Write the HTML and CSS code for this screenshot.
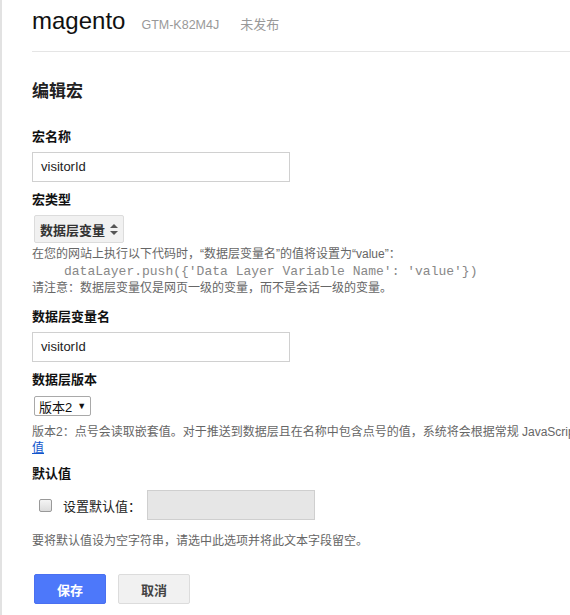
FILE: index.html
```html
<!DOCTYPE html>
<html lang="zh">
<head>
<meta charset="utf-8">
<link rel="stylesheet" href="styles.css">
</head>
<body>
<div class="page">
  <header class="header">
    <span class="brand">magento</span>
    <span class="container-id">GTM-K82M4J</span>
    <span class="status">未发布</span>
  </header>
  <main class="content">
    <h1 class="title">编辑宏</h1>

    <div class="field">
      <div class="label">宏名称</div>
      <div class="input">visitorId</div>
    </div>

    <div class="field field-help">
      <div class="label">宏类型</div>
      <div class="type-select">数据层变量
        <svg class="updown" width="8" height="11" viewBox="0 0 8 11"><path d="M4 0L8 4H0Z M4 11L8 7H0Z" fill="#555"/></svg>
      </div>
      <div class="help">
        <div>在您的网站上执行以下代码时，“数据层变量名”的值将设置为“value”：</div>
        <div class="code">dataLayer.push({'Data Layer Variable Name': 'value'})</div>
        <div>请注意：数据层变量仅是网页一级的变量，而不是会话一级的变量。</div>
      </div>
    </div>

    <div class="field">
      <div class="label">数据层变量名</div>
      <div class="input">visitorId</div>
    </div>

    <div class="field">
      <div class="label">数据层版本</div>
      <div class="version-select">版本2 <span class="arrow">▼</span></div>
      <div class="help help-wide">
        <div class="nowrap">版本2：点号会读取嵌套值。对于推送到数据层且在名称中包含点号的值，系统将会根据常规 JavaScript 规则将其解读为嵌套</div>
        <a class="link" href="#">值</a>
      </div>
    </div>

    <div class="field">
      <div class="label">默认值</div>
      <div class="default-row">
        <span class="checkbox"></span>
        <span class="default-label">设置默认值：</span>
        <span class="input input-disabled"></span>
      </div>
      <div class="help">要将默认值设为空字符串，请选中此选项并将此文本字段留空。</div>
    </div>

    <div class="actions">
      <button class="btn btn-primary">保存</button>
      <button class="btn">取消</button>
    </div>
  </main>
</div>
</body>
</html>
```

FILE: styles.css
```css
html, body {
  margin: 0;
  padding: 0;
  background: #fff;
  overflow: hidden;
}
body {
  font-family: "Liberation Sans", "Noto Sans CJK SC", sans-serif;
  color: #222;
}
.page {
  border-left: 2px solid #e2e2e2;
  margin-left: 0;
  padding-left: 30px;
  min-height: 615px;
  box-sizing: border-box;
}
.header {
  display: flex;
  align-items: baseline;
  height: 52px;
  box-sizing: border-box;
  padding-top: 6px;
  border-bottom: 1px solid #e5e5e5;
  line-height: 30px;
}
.brand {
  font-size: 24px;
  color: #111;
}
.container-id {
  font-size: 12.5px;
  color: #999;
  margin-left: 16px;
}
.status {
  font-size: 13px;
  color: #999;
  margin-left: 21px;
}
.content {
  padding-top: 28px;
}
.title {
  margin: 0 0 24px;
  font-size: 17px;
  line-height: 24px;
  font-weight: bold;
  color: #222;
}
.field {
  margin-bottom: 9px;
}
.field-help {
  margin-bottom: 11px;
}
.label {
  font-size: 13px;
  font-weight: bold;
  color: #111;
  line-height: 17px;
  margin-bottom: 7px;
}
.input {
  display: block;
  box-sizing: border-box;
  width: 258px;
  height: 30px;
  border: 1px solid #d0d0d0;
  padding: 0 8px;
  font-size: 13px;
  line-height: 28px;
  color: #222;
}
.type-select {
  display: inline-flex;
  align-items: center;
  gap: 5px;
  margin-left: 2px;
  height: 28px;
  box-sizing: border-box;
  padding: 0 5px;
  background: #f1f1f1;
  border: 1px solid #dcdcdc;
  border-radius: 2px;
  font-size: 13px;
  font-weight: bold;
  color: #333;
}
.help {
  font-size: 12px;
  line-height: 17px;
  color: #666;
  margin-top: 3px;
}
.code {
  font-family: "Liberation Mono", monospace;
  font-size: 13px;
  color: #888;
  padding-left: 32px;
}
.version-select {
  display: inline-flex;
  align-items: center;
  margin-left: 2px;
  margin-top: 1px;
  height: 20px;
  box-sizing: border-box;
  padding: 0 4px;
  border: 1px solid #a9a9a9;
  border-radius: 2px;
  font-size: 13px;
  color: #111;
}
.arrow {
  font-size: 9px;
  margin-left: 5px;
}
.help-wide {
  width: 700px;
  margin-top: 8px;
  line-height: 16px;
}
.nowrap {
  white-space: nowrap;
}
.link {
  color: #1155cc;
  text-decoration: underline;
}
.default-row {
  display: flex;
  align-items: center;
  margin-top: 8px;
  margin-left: 7px;
}
.checkbox {
  width: 11px;
  height: 11px;
  border: 1px solid #999;
  border-radius: 2px;
  background: linear-gradient(#f4f4f4, #dcdcdc);
}
.default-label {
  font-size: 13px;
  color: #222;
  margin-left: 11px;
  margin-right: 6px;
}
.input-disabled {
  width: 168px;
  background: #e6e6e6;
  border-color: #cfcfcf;
}
.default-row + .help {
  margin-top: 13px;
}
.actions {
  display: flex;
  gap: 12px;
  margin-top: 24px;
  margin-left: 2px;
}
.btn {
  height: 30px;
  width: 72px;
  box-sizing: border-box;
  border: 1px solid #dcdcdc;
  border-radius: 2px;
  background: #f1f1f1;
  font-family: "Liberation Sans", "Noto Sans CJK SC", sans-serif;
  font-size: 13px;
  font-weight: bold;
  color: #444;
  padding: 0;
}
.btn-primary {
  background: #4d78fa;
  border-color: #4a70f0;
  color: #fff;
}
```
